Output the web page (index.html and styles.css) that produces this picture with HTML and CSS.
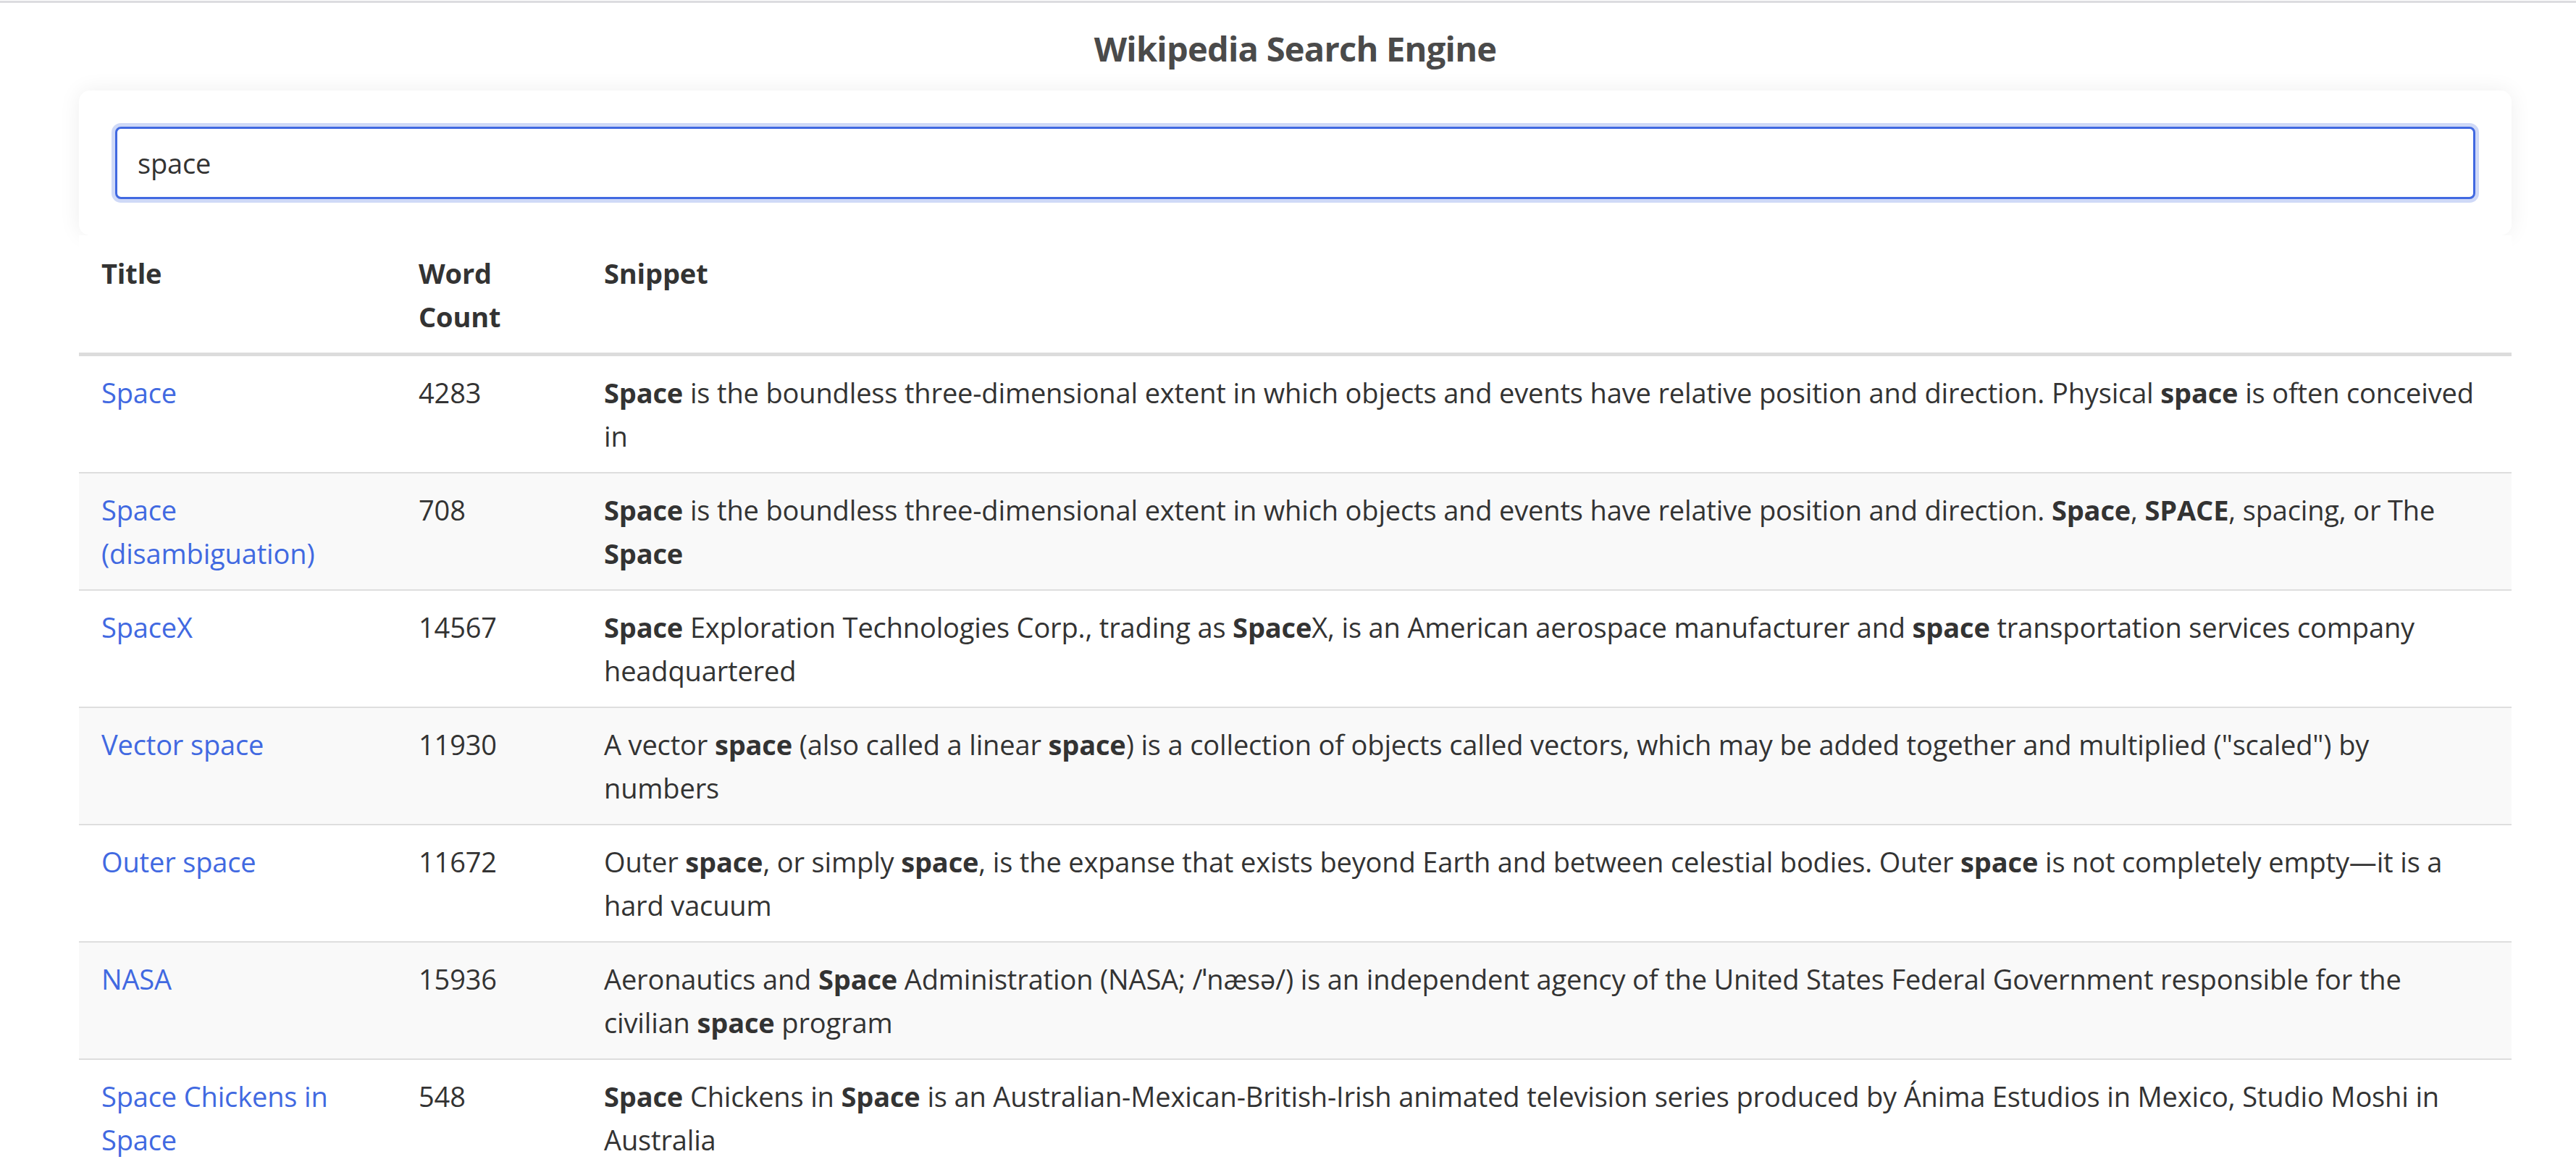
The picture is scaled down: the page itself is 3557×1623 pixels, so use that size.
FILE: index.html
```html
<!DOCTYPE html>
<html lang="en">
<head>
<meta charset="utf-8">
<title>Wikipedia Search Engine</title>
<link rel="stylesheet" href="styles.css">
</head>
<body>
<div class="topbar"></div>
<main class="container">
  <h1 class="page-title">Wikipedia Search Engine</h1>
  <div class="search-card">
    <input class="search-input" type="text" value="space" autofocus>
  </div>
  <table class="results">
    <colgroup>
      <col class="col-title">
      <col class="col-count">
      <col class="col-snippet">
    </colgroup>
    <thead>
      <tr><th>Title</th><th>Word Count</th><th>Snippet</th></tr>
    </thead>
    <tbody>
      <tr>
        <td><a href="#">Space</a></td>
        <td>4283</td>
        <td><b>Space</b> is the boundless three-dimensional extent in which objects and events have relative position and direction. Physical <b>space</b> is often conceived in</td>
      </tr>
      <tr>
        <td><a href="#">Space (disambiguation)</a></td>
        <td>708</td>
        <td><b>Space</b> is the boundless three-dimensional extent in which objects and events have relative position and direction. <b>Space</b>, <b>SPACE</b>, spacing, or The <b>Space</b></td>
      </tr>
      <tr>
        <td><a href="#">SpaceX</a></td>
        <td>14567</td>
        <td><b>Space</b> Exploration Technologies Corp., trading as <b>Space</b>X, is an American aerospace manufacturer and <b>space</b> transportation services company headquartered</td>
      </tr>
      <tr>
        <td><a href="#">Vector space</a></td>
        <td>11930</td>
        <td>A vector <b>space</b> (also called a linear <b>space</b>) is a collection of objects called vectors, which may be added together and multiplied ("scaled") by numbers</td>
      </tr>
      <tr>
        <td><a href="#">Outer space</a></td>
        <td>11672</td>
        <td>Outer <b>space</b>, or simply <b>space</b>, is the expanse that exists beyond Earth and between celestial bodies. Outer <b>space</b> is not completely empty—it is a hard vacuum</td>
      </tr>
      <tr>
        <td><a href="#">NASA</a></td>
        <td>15936</td>
        <td>Aeronautics and <b>Space</b> Administration (NASA; /ˈnæsə/) is an independent agency of the United States Federal Government responsible for the civilian <b>space</b> program</td>
      </tr>
      <tr>
        <td><a href="#">Space Chickens in Space</a></td>
        <td>548</td>
        <td><b>Space</b> Chickens in <b>Space</b> is an Australian-Mexican-British-Irish animated television series produced by Ánima Estudios in Mexico, Studio Moshi in Australia</td>
      </tr>
    </tbody>
  </table>
</main>
</body>
</html>
```
FILE: styles.css
```css
html, body {
  margin: 0;
  padding: 0;
  background: #ffffff;
}

body {
  font-family: "Open Sans", "Noto Sans", sans-serif;
  font-size: 38px;
  letter-spacing: -0.15px;
  line-height: 60px;
  color: #333333;
  overflow: hidden;
}

.topbar {
  height: 3px;
  margin-top: 1px;
  background: #dcdce0;
}

.container {
  margin-left: 109px;
  width: 3359px;
}

.page-title {
  margin: 33px 0 0;
  font-size: 47px;
  line-height: 60px;
  letter-spacing: -0.75px;
  font-weight: 700;
  color: #4a4a4a;
  text-align: center;
}

.search-card {
  margin-top: 28px;
  padding: 50px;
  background: #ffffff;
  border-radius: 15px;
  box-shadow: 0 0 30px rgba(0, 0, 0, 0.07);
}

.search-input {
  display: block;
  box-sizing: border-box;
  width: 100%;
  height: 100px;
  margin: 0;
  padding: 0 28px;
  font-family: "Open Sans", "Noto Sans", sans-serif;
  font-size: 38px;
  letter-spacing: -0.15px;
  color: #333333;
  background: #ffffff;
  border: 3px solid #4169e1;
  border-radius: 8px;
  box-shadow: 0 0 0 5px rgba(65, 105, 225, 0.25);
  outline: none;
  caret-color: #222222;
}

.results {
  width: 100%;
  table-layout: fixed;
  border-collapse: collapse;
  border-spacing: 0;
  background: #ffffff;
  position: relative;
}

.col-title { width: 438px; }
.col-count { width: 256px; }

.results th,
.results td {
  text-align: left;
  vertical-align: top;
  padding: 20px 31px;
}

.results th {
  padding-top: 22px;
  font-weight: 700;
  border-bottom: 5px solid #dcdcdc;
}

.results td {
  border-bottom: 2px solid #dedede;
}

.results tbody tr:nth-child(even) td {
  background: #f9f9f9;
}

.results b {
  font-weight: 700;
}

.results a {
  color: #4169e1;
  text-decoration: none;
}
```
